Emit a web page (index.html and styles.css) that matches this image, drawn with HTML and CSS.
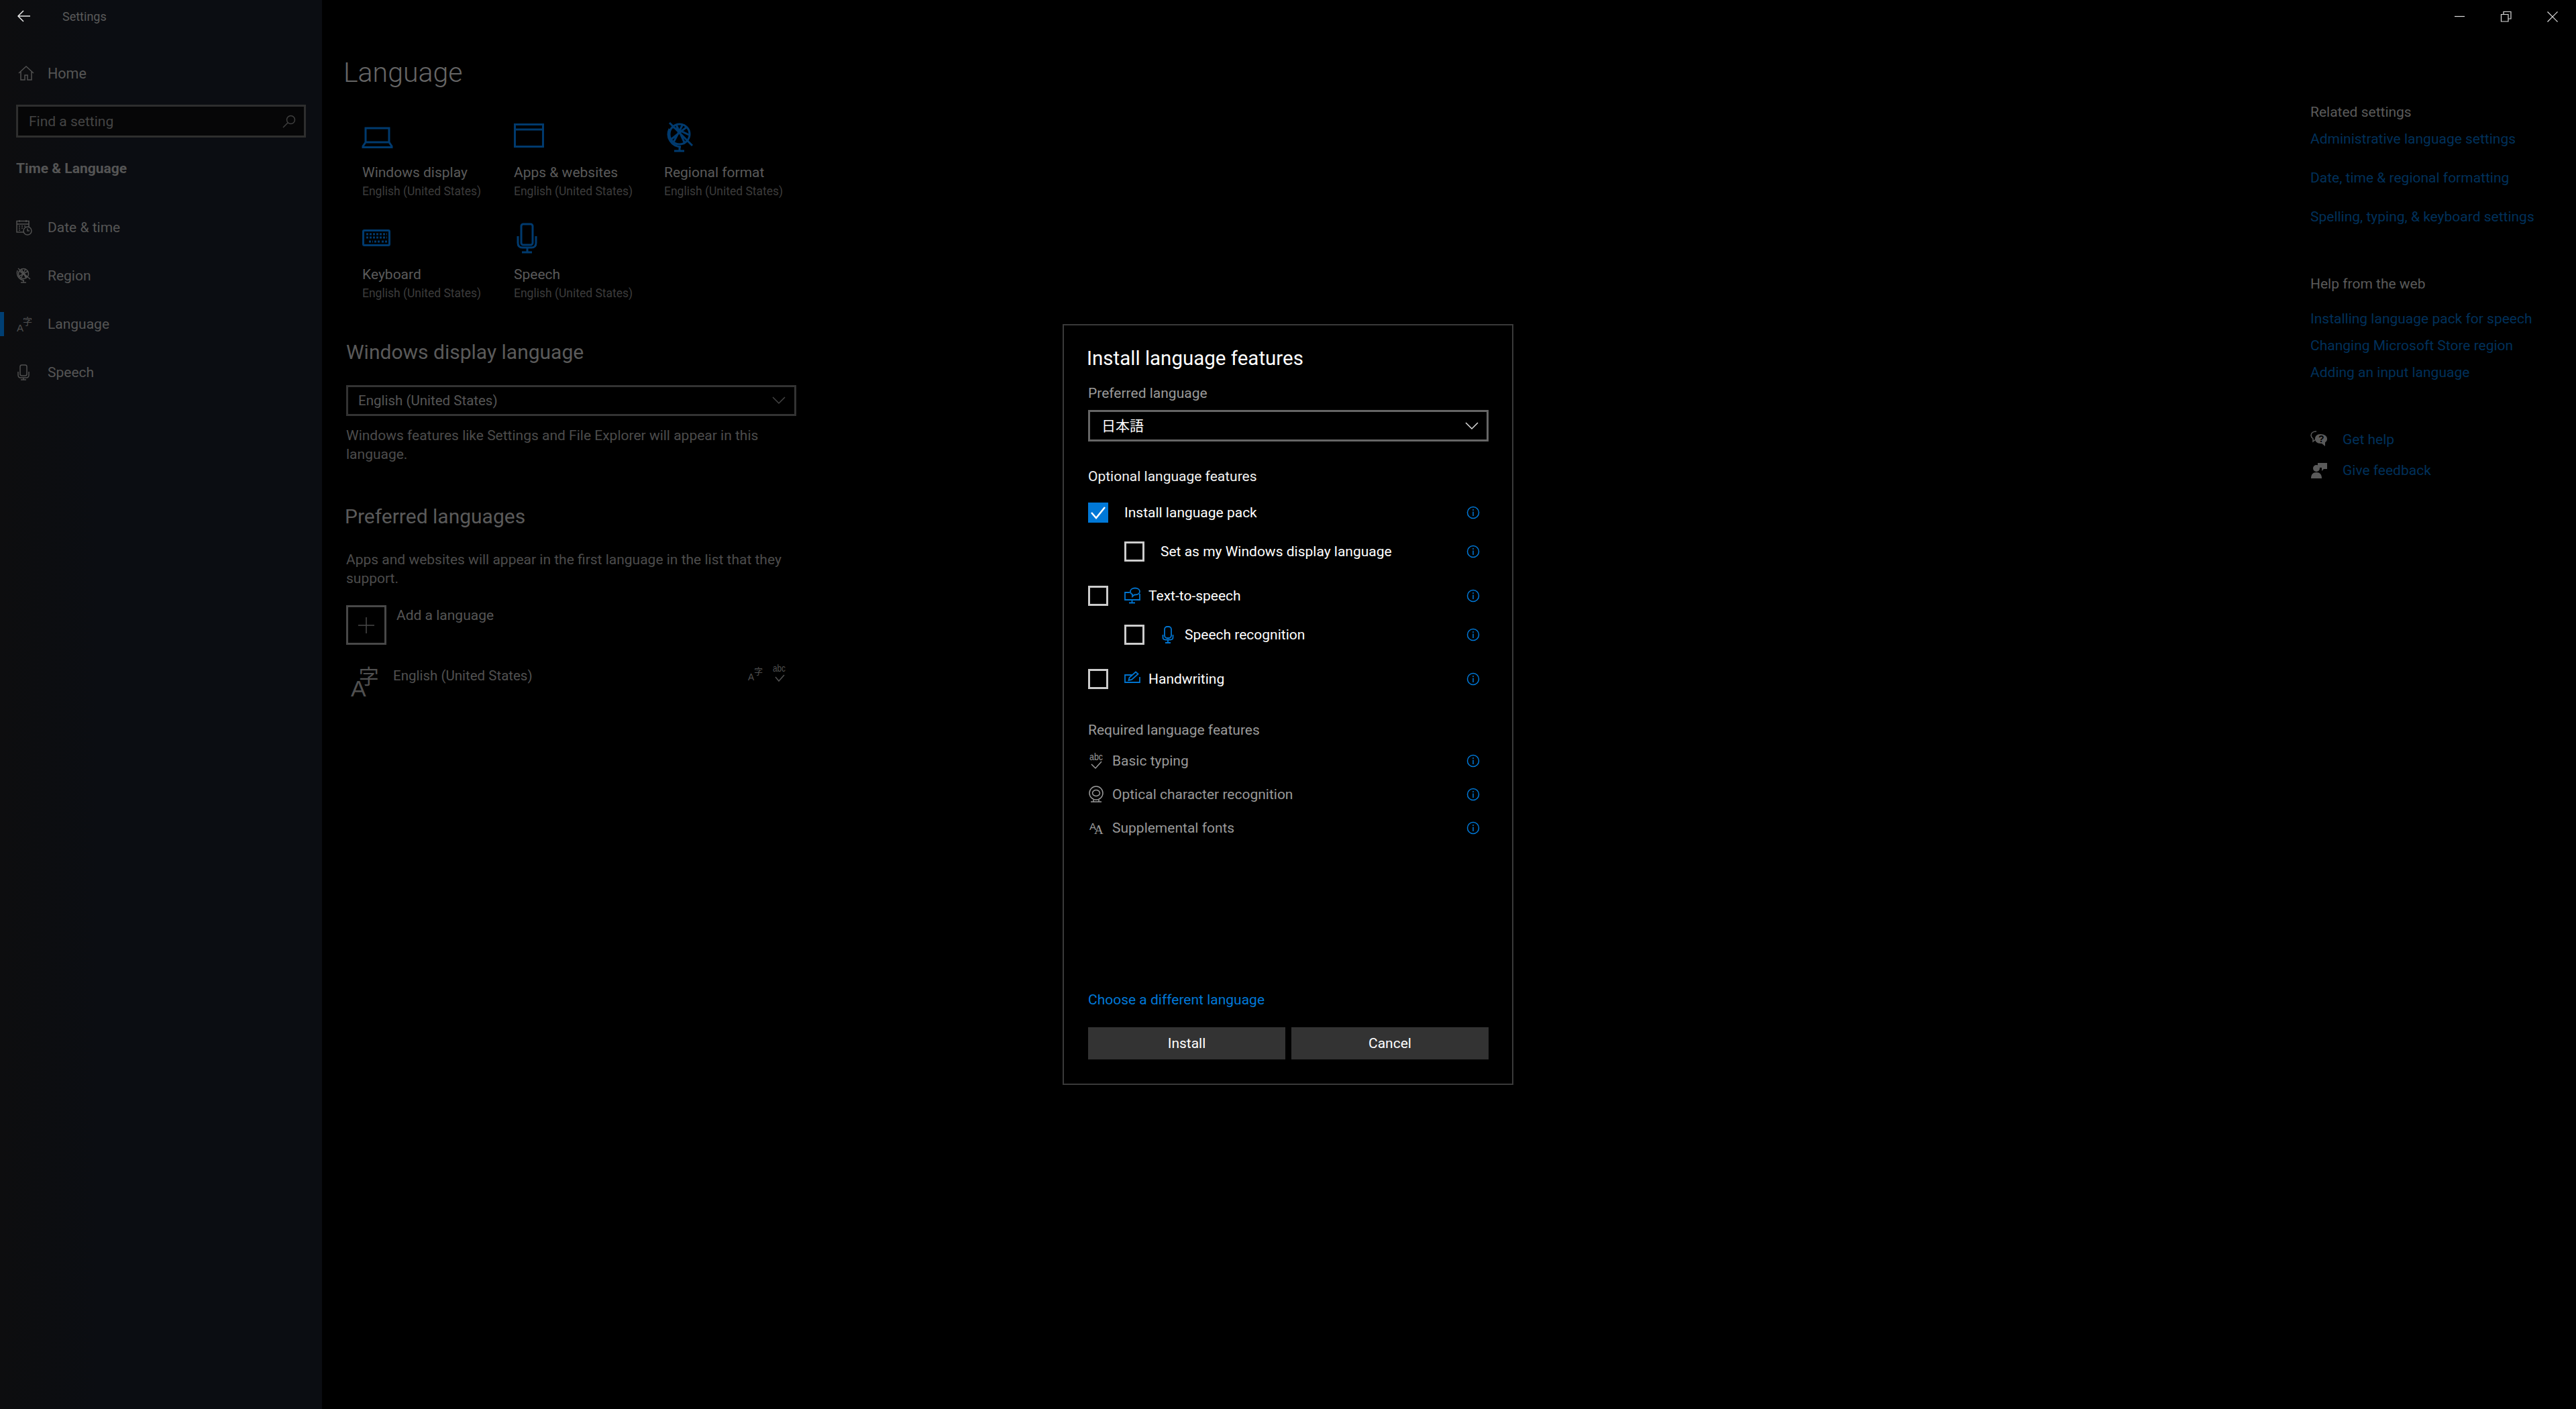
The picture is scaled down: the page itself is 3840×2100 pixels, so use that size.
FILE: index.html
```html
<!DOCTYPE html>
<html lang="en">
<head>
<meta charset="utf-8">
<title>Settings</title>
<link rel="stylesheet" href="styles.css">
</head>
<body>
<div class="page">
  <nav class="sidebar">
    <div class="titlebar">
      <svg class="back" width="20" height="18" viewBox="0 0 20 18"><path d="M19 9H1M9 1 1 9l8 8"/></svg>
      <span class="app-name">Settings</span>
    </div>
    <div class="nav-home">
      <svg class="ni" width="24" height="22" viewBox="0 0 24 22"><path d="M1 11 12 1l11 10M4 9v12h6v-7h4v7h6V9"/></svg>
      <span>Home</span>
    </div>
    <div class="search"><span>Find a setting</span>
      <svg class="ni" width="20" height="20" viewBox="0 0 20 20"><circle cx="12.500" cy="7.500" r="6"/><path d="M8 12 1 19"/></svg>
    </div>
    <div class="nav-section">Time &amp; Language</div>
    <ul class="nav-list">
      <li class="nav-item">
        <svg class="ni" width="24" height="24" viewBox="0 0 24 24"><path d="M11 19H1V2.500h18v9M1 7h18M5 1v3M15 1v3M4 10h2M8 10h2M12 10h2M4 13h2M8 13h2M4 16h2"/><circle cx="17" cy="17" r="6"/><path d="M17 13.500V17h3"/></svg>
        <span>Date &amp; time</span>
      </li>
      <li class="nav-item">
        <svg class="ni" width="24" height="24" viewBox="0 0 24 24"><circle cx="11" cy="9" r="7.500"/><path d="M3 1 21 17M4 13 18 5M5 5l11 9M8 2l7 14M14 2 7 16M2 4c-2 7 2 14 10 15M11 19v3M7 22h8"/></svg>
        <span>Region</span>
      </li>
      <li class="nav-item nav-active">
        <svg class="ni" width="24" height="24" viewBox="0 0 24 24"><text x="1" y="23"><tspan class="glyph-a">A</tspan><tspan class="glyph-z" dx="-1" dy="-10">字</tspan></text></svg>
        <span>Language</span>
      </li>
      <li class="nav-item">
        <svg class="ni" width="24" height="24" viewBox="0 0 24 24"><rect x="6" y="1" width="10" height="16" rx="2.500"/><path d="M3 11v5c0 3 2 4 4 4h8c2 0 4-1 4-4v-5M11 20v3M7 23h8"/></svg>
        <span>Speech</span>
      </li>
    </ul>
  </nav>

  <main class="content">
    <h1 class="page-title">Language</h1>
    <section class="tiles">
      <div class="tile">
        <svg class="tile-icon" width="50" height="50" viewBox="0 0 50 50"><path d="M5 32V11h35v21M5 32 1 38v1.500h43V38l-4-6z"/></svg>
        <div class="tile-name">Windows display</div>
        <div class="tile-sub">English (United States)</div>
      </div>
      <div class="tile">
        <svg class="tile-icon" width="50" height="50" viewBox="0 0 50 50"><path d="M1.500 5.500h42v33h-42zM1.500 13h42"/></svg>
        <div class="tile-name">Apps &amp; websites</div>
        <div class="tile-sub">English (United States)</div>
      </div>
      <div class="tile">
        <svg class="tile-icon" width="50" height="50" viewBox="0 0 50 50"><circle cx="23" cy="20" r="15"/><path d="M8 3 42 37M12 9 37 21M10 28 34 9M18 6l13 28M28 5 14 32M8 12c-6 13 3 26 17 27M23 39v6M15 45h15"/></svg>
        <div class="tile-name">Regional format</div>
        <div class="tile-sub">English (United States)</div>
      </div>
      <div class="tile">
        <svg class="tile-icon" width="50" height="50" viewBox="0 0 50 50"><rect x="1.500" y="11.500" width="39" height="22" rx="1.500"/><path class="dash" d="M6 17h31M6 22h31M10 28h6M18 28h8M29 28h8"/></svg>
        <div class="tile-name">Keyboard</div>
        <div class="tile-sub">English (United States)</div>
      </div>
      <div class="tile">
        <svg class="tile-icon" width="50" height="50" viewBox="0 0 50 50"><rect x="11" y="2" width="17" height="31" rx="3"/><path d="M6 20v10c0 5 3 7 7 7h13c4 0 7-2 7-7V20M20 37v7M12 44h15"/></svg>
        <div class="tile-name">Speech</div>
        <div class="tile-sub">English (United States)</div>
      </div>
    </section>

    <h2 class="section-title section-title-indent">Windows display language</h2>
    <div class="combo"><span>English (United States)</span>
      <svg width="20" height="12" viewBox="0 0 20 12"><path d="M1 1l9 9 9-9"/></svg>
    </div>
    <p class="desc desc-first">Windows features like Settings and File Explorer will appear in this<br>language.</p>

    <h2 class="section-title section-second">Preferred languages</h2>
    <p class="desc desc-pref">Apps and websites will appear in the first language in the list that they<br>support.</p>

    <div class="add-row">
      <div class="add-box"><svg width="26" height="26" viewBox="0 0 26 26"><path d="M13 1v24M1 13h24"/></svg></div>
      <span class="add-label">Add a language</span>
    </div>

    <div class="lang-row">
      <svg class="lang-icon" width="46" height="50" viewBox="0 0 46 50"><text x="0" y="46"><tspan class="lang-a">A</tspan><tspan class="lang-z" dx="-11" dy="-19">字</tspan></text></svg>
      <span class="lang-name">English (United States)</span>
      <span class="lang-flags">
        <svg width="22" height="26" viewBox="0 0 24 26"><text x="0" y="24"><tspan class="glyph-a">A</tspan><tspan class="glyph-z" dy="-10">字</tspan></text></svg>
        <svg width="22" height="26" viewBox="0 0 22 26"><text class="glyph-abc" x="1" y="10" textLength="19" lengthAdjust="spacingAndGlyphs">abc</text><path class="flag-check" d="M5 18l5 6 8-9"/></svg>
      </span>
    </div>
  </main>

  <aside class="side">
    <div class="win-controls">
      <svg width="16" height="16" viewBox="0 0 16 16"><path d="M0 7.500h15"/></svg>
      <svg width="16" height="16" viewBox="0 0 16 16"><path d="M.5 4.500h10.500v10.500H.5zM4 4.500V.5h11v10.500h-4"/></svg>
      <svg width="16" height="16" viewBox="0 0 16 16"><path d="M.5.500l15 15M15.500.500l-15 15"/></svg>
    </div>
    <h3 class="side-head side-related">Related settings</h3>
    <div class="side-links side-links-wide">
      <a>Administrative language settings</a>
      <a>Date, time &amp; regional formatting</a>
      <a>Spelling, typing, &amp; keyboard settings</a>
    </div>
    <h3 class="side-head side-help">Help from the web</h3>
    <div class="side-links side-links-tight">
      <a>Installing language pack for speech</a>
      <a>Changing Microsoft Store region</a>
      <a>Adding an input language</a>
    </div>
    <div class="side-actions">
      <div class="side-action">
        <svg width="26" height="26" viewBox="0 0 26 26"><path class="stroke" d="M9 1C4 1 1 3.500 1 7c0 2 1 3.500 3 5v4l4-3h2"/><path class="fill" d="M15 5c6 0 10 3 10 7 0 2.500-1 4-3 5.500V23l-5-4h-2c-5 0-8-3-8-7s3-7 8-7z"/><text class="help-q" x="12" y="17">?</text></svg>
        <a>Get help</a>
      </div>
      <div class="side-action">
        <svg width="26" height="26" viewBox="0 0 26 26"><circle class="fill" cx="9" cy="10" r="5"/><path class="fill" d="M1 25c0-6 3-9 8-9s8 3 8 9z"/><path class="fill" d="M11 2h14v9h-5l-3 3V9h-6z"/></svg>
        <a>Give feedback</a>
      </div>
    </div>
  </aside>
</div>

<div class="dialog">
  <h2 class="dlg-title">Install language features</h2>
  <div class="dlg-label">Preferred language</div>
  <div class="dlg-select"><span>日本語</span>
    <svg width="20" height="12" viewBox="0 0 20 12"><path d="M1 1l9 9 9-9"/></svg>
  </div>
  <div class="dlg-optional">Optional language features</div>

  <div class="opt opt-first">
    <span class="check checked"><svg width="30" height="30" viewBox="0 0 30 30"><path d="M5 15l7 8L25 7"/></svg></span>
    <span class="opt-label">Install language pack</span>
    <svg class="info" width="20" height="20" viewBox="0 0 20 20"><circle cx="10" cy="10" r="8.500"/><path d="M10 8.500V15M10 5v2"/></svg>
  </div>
  <div class="opt opt-sub">
    <span class="check"></span>
    <span class="opt-label">Set as my Windows display language</span>
    <svg class="info" width="20" height="20" viewBox="0 0 20 20"><circle cx="10" cy="10" r="8.500"/><path d="M10 8.500V15M10 5v2"/></svg>
  </div>
  <div class="opt opt-top">
    <span class="check"></span>
    <span class="feat">
      <svg class="feat-icon" width="26" height="26" viewBox="0 0 26 26"><path d="M8 8H1v11h22v-9M11.500 19v4M7 23.500h9"/><path d="M16 1.500c4 0 7 2 7 5s-3 5-7 5h-1l-3 2.500v-3.200C10 10 9 8.500 9 6.500c0-3 3-5 7-5z"/></svg>
      <span class="opt-label">Text-to-speech</span>
    </span>
    <svg class="info" width="20" height="20" viewBox="0 0 20 20"><circle cx="10" cy="10" r="8.500"/><path d="M10 8.500V15M10 5v2"/></svg>
  </div>
  <div class="opt opt-sub">
    <span class="check"></span>
    <span class="feat">
      <svg class="feat-icon" width="26" height="26" viewBox="0 0 26 26"><rect x="6" y="1" width="10" height="17" rx="4"/><path d="M3.500 13v4c0 2.500 2 3.500 4 3.500h7c2 0 4-1 4-3.500v-4M11 21v4M7 25h8"/></svg>
      <span class="opt-label">Speech recognition</span>
    </span>
    <svg class="info" width="20" height="20" viewBox="0 0 20 20"><circle cx="10" cy="10" r="8.500"/><path d="M10 8.500V15M10 5v2"/></svg>
  </div>
  <div class="opt opt-top">
    <span class="check"></span>
    <span class="feat">
      <svg class="feat-icon" width="26" height="26" viewBox="0 0 26 26"><path d="M12 7H1v11h22v-8"/><path d="M6.500 15l1-4L17 2.500l3.500 3L11 14z"/></svg>
      <span class="opt-label">Handwriting</span>
    </span>
    <svg class="info" width="20" height="20" viewBox="0 0 20 20"><circle cx="10" cy="10" r="8.500"/><path d="M10 8.500V15M10 5v2"/></svg>
  </div>

  <div class="dlg-required">Required language features</div>
  <div class="req req-first">
    <span class="feat">
      <svg class="req-icon" width="26" height="26" viewBox="0 0 26 26"><text class="req-abc" x="2" y="12" textLength="20" lengthAdjust="spacingAndGlyphs">abc</text><path d="M5 18l6 6 9-10"/></svg>
      <span>Basic typing</span>
    </span>
    <svg class="info" width="20" height="20" viewBox="0 0 20 20"><circle cx="10" cy="10" r="8.500"/><path d="M10 8.500V15M10 5v2"/></svg>
  </div>
  <div class="req">
    <span class="feat">
      <svg class="req-icon" width="26" height="26" viewBox="0 0 26 26"><circle cx="12" cy="11" r="10"/><ellipse cx="12" cy="11" rx="5.500" ry="4.500"/><path d="M4 24h16M8 21v3M16 21v3"/></svg>
      <span>Optical character recognition</span>
    </span>
    <svg class="info" width="20" height="20" viewBox="0 0 20 20"><circle cx="10" cy="10" r="8.500"/><path d="M10 8.500V15M10 5v2"/></svg>
  </div>
  <div class="req">
    <span class="feat">
      <svg class="req-icon" width="26" height="26" viewBox="0 0 26 26"><text x="2" y="16"><tspan class="req-a1">A</tspan><tspan class="req-a2" dx="-3" dy="6">A</tspan></text></svg>
      <span>Supplemental fonts</span>
    </span>
    <svg class="info" width="20" height="20" viewBox="0 0 20 20"><circle cx="10" cy="10" r="8.500"/><path d="M10 8.500V15M10 5v2"/></svg>
  </div>

  <a class="dlg-link">Choose a different language</a>
  <div class="dlg-buttons">
    <button class="btn">Install</button>
    <button class="btn">Cancel</button>
  </div>
</div>
</body>
</html>
```
FILE: styles.css
```css
* { box-sizing: border-box; }
html, body { margin: 0; height: 100%; background: #000; }
body { font-family: Roboto, "Noto Sans CJK JP", sans-serif; color: #5a5a5a; overflow: hidden; }
h1, h2, h3, p, ul { margin: 0; padding: 0; font-weight: 400; }
ul { list-style: none; }
svg { display: block; flex: none; fill: none; stroke: currentColor; stroke-width: 2; overflow: visible; }
svg text { stroke: none; fill: currentColor; font-family: "Liberation Sans", "Noto Sans CJK JP", sans-serif; }

.page { display: grid; grid-template-columns: 480px 1fr 396px; height: 2100px; }

/* Sidebar */
.sidebar { background: linear-gradient(90deg, #0d0d0f, #0b0d12 30%); color: #555; }
.titlebar { display: flex; align-items: center; height: 48px; padding-left: 26px; gap: 47px; }
.back { color: #e8e8e8; stroke-width: 1.500; }
.app-name { font-size: 18px; color: #5a5a5a; }
.nav-home { display: flex; align-items: center; gap: 20px; height: 62px; margin-top: 30px; padding-left: 27px; font-size: 21.500px; }
.ni { color: #505050; stroke-width: 1.500; }
.search { display: flex; align-items: center; justify-content: space-between; height: 49px; margin: 16px 24px 0; padding: 0 12px 0 16px; border: 3px solid #2e2e2e; background: #060607; font-size: 21px; color: #444; }
.search .ni { color: #404040; }
.nav-section { height: 40px; line-height: 40px; margin: 26px 0 0 24px; font-size: 21px; font-weight: 700; color: #555; }
.nav-list { margin-top: 32px; }
.nav-item { display: flex; align-items: center; gap: 23px; height: 72px; padding-left: 24px; font-size: 21px; }
.nav-active { position: relative; }
.nav-active::before { content: ""; position: absolute; left: 0; top: 18px; width: 6px; height: 36px; background: #003f73; }
.glyph-a { font-size: 15px; }
.glyph-z { font-size: 14px; }

/* Main */
.content { padding: 80px 0 0 34px; }
.page-title { margin-left: -2px; font-size: 41px; line-height: 56px; font-weight: 300; color: #666; }
.tiles { display: grid; grid-template-columns: 226px 224px 224px; grid-auto-rows: 152px; margin: 44px 0 0 26px; }
.tile-icon { color: #003a6e; stroke-width: 3; }
.tile-name { margin-top: 12px; font-size: 21px; line-height: 30px; color: #5a5a5a; }
.tile-sub { font-size: 17.500px; line-height: 26px; color: #3c3c3c; }
.dash { stroke-dasharray: 3 2; }
.section-title { font-size: 30px; line-height: 40px; color: #5a5a5a; }
.section-title-indent { margin: 21px 0 0 2px; }
.combo { display: flex; align-items: center; justify-content: space-between; width: 671px; height: 46px; margin: 29px 0 0 2px; padding: 0 13px 0 15px; border: 3px solid #333; font-size: 20.500px; color: #555; }
.combo svg { color: #444; stroke-width: 1.500; }
.desc { font-size: 21px; line-height: 28px; margin-left: 2px; color: #4c4c4c; }
.desc-first { margin-top: 15px; }
.section-second { margin-top: 59px; }
.desc-pref { margin-top: 31px; line-height: 27.500px; }
.add-row { display: flex; margin: 26px 0 0 2px; height: 59px; gap: 15px; }
.add-box { display: flex; align-items: center; justify-content: center; width: 60px; height: 59px; border: 3px solid #484848; color: #484848; }
.add-box svg { stroke-width: 1.500; }
.add-label { font-size: 21px; line-height: 30px; color: #555; }
.lang-row { display: flex; width: 650px; margin: 31px 0 0 9px; height: 50px; color: #505050; }
.lang-icon { width: 46px; margin-right: 17px; }
.lang-a { font-size: 34px; }
.lang-z { font-size: 30px; }
.lang-name { font-size: 20.500px; line-height: 30px; }
.lang-flags { display: flex; gap: 14px; margin-left: auto; color: #505050; margin-top: -1px; }
.glyph-abc { font-size: 14px; }
.flag-check { stroke-width: 1.500; }

/* Aside */
.side { font-size: 21px; }
.win-controls { display: flex; justify-content: flex-end; gap: 53px; height: 48px; padding: 17px 27px 0 0; color: #dcdcdc; }
.win-controls svg { stroke-width: 1.200; }
.side-head { font-size: 21px; line-height: 30px; color: #5a5a5a; }
.side-related { margin-top: 104px; }
.side-help { margin-top: 70px; }
.side-links { display: flex; flex-direction: column; color: #00305a; line-height: 30px; }
.side-links-wide { margin-top: 10px; gap: 28px; }
.side-links-tight { margin-top: 22px; gap: 10px; }
.side-actions { margin-top: 70px; display: flex; flex-direction: column; gap: 16px; }
.side-action { display: flex; align-items: center; gap: 22px; height: 30px; color: #00305a; }
.side-action svg { color: #5a5a5a; stroke-width: 1.500; }
.side-action .fill { fill: #5a5a5a; stroke: none; }
.side-action .stroke { fill: none; }
.help-q { fill: #000; font-size: 14px; font-weight: 700; }

/* Dialog */
.dialog { position: absolute; left: 1584px; top: 483px; width: 672px; height: 1134px; display: flex; flex-direction: column; padding: 29px 35px 36px 36px; border: 2px solid #3a3a3a; background: #000; color: #fff; font-size: 21px; }
.dlg-title { margin-left: -2px; font-size: 29.500px; line-height: 40px; color: #fff; }
.dlg-label { margin-top: 18px; line-height: 28px; color: #9a9a9a; }
.dlg-select { display: flex; align-items: center; justify-content: space-between; height: 47px; margin-top: 11px; padding: 0 12px 0 17px; border: 3px solid #666; font-family: "Noto Sans CJK JP", sans-serif; color: #fff; }
.dlg-select span { line-height: 1; margin-top: -3px; }
.dlg-select svg { color: #ddd; stroke-width: 1.500; }
.dlg-optional { margin-top: 38px; line-height: 28px; color: #f2f2f2; }
.opt { display: flex; align-items: center; gap: 24px; height: 40px; padding-right: 13px; }
.opt-first { margin-top: 20px; }
.opt-sub { margin: 18px 0 0 54px; }
.opt-top { margin-top: 26px; }
.opt-label { color: #fff; }
.check { display: flex; flex: none; width: 30px; height: 30px; border: 3px solid #ccc; }
.checked { border: 0; background: #0078d7; }
.checked svg { color: #fff; stroke-width: 2.500; }
.feat { display: flex; align-items: center; gap: 10px; }
.feat-icon { color: #0074d0; stroke-width: 1.800; }
.info { margin-left: auto; color: #0078d7; stroke-width: 1.500; }
.dlg-required { margin-top: 42px; line-height: 28px; color: #9a9a9a; }
.req { display: flex; align-items: center; height: 40px; margin-top: 10px; padding-right: 13px; color: #999; }
.req-first { margin-top: 12px; }
.req-icon { color: #999; stroke-width: 1.500; }
.req-abc { font-size: 15px; }
.req-a1 { font-size: 15px; }
.req-a2 { font-size: 19px; font-family: "Liberation Serif", serif; }
.dlg-link { margin-top: auto; margin-bottom: 27px; line-height: 28px; color: #0078d7; }
.dlg-buttons { display: flex; gap: 9px; }
.btn { flex: 1; height: 48px; border: 0; background: #333; color: #fff; font: inherit; padding: 0; }
```
